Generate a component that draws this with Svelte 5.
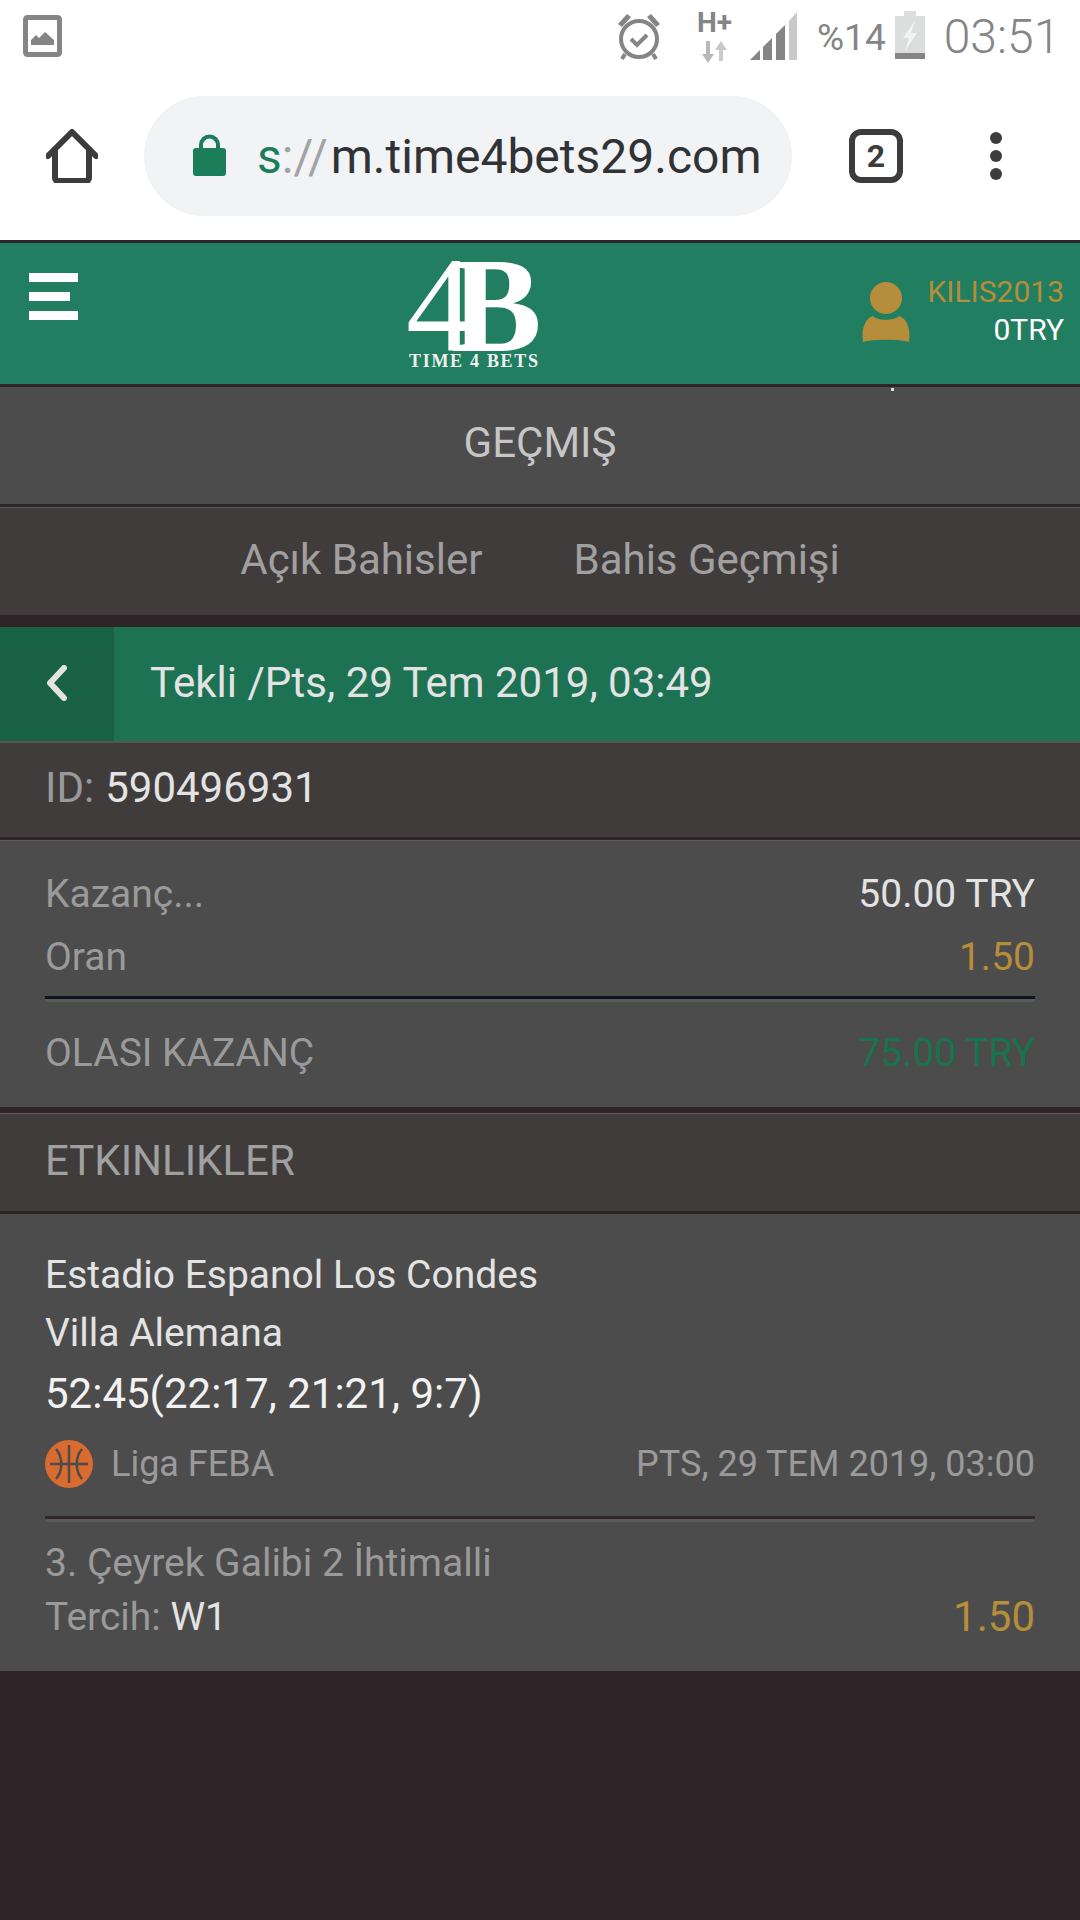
<script>
    const summary = [
        { label: 'Kazanç...', value: '50.00 TRY', tone: 'light' },
        { label: 'Oran', value: '1.50', tone: 'gold' }
    ];
</script>

<div class="page">
    <div class="status">
        <svg class="pic" viewBox="0 0 39 42" width="39" height="42">
            <rect x="2.5" y="2.5" width="34" height="37" rx="2" fill="#fff" stroke="#858585" stroke-width="5" />
            <path d="M8 30V25l5-5 3 3 6-6 9 8v5z" fill="#858585" />
        </svg>
        <svg class="alarm" viewBox="0 0 44 48" width="44" height="48">
            <circle cx="22" cy="27" r="18" fill="none" stroke="#858585" stroke-width="4" />
            <path d="M1 12 10 2l4 3-9 10zM43 12 34 2l-4 3 9 10z" fill="#858585" />
            <path d="M14 27l6 6 10-10" fill="none" stroke="#858585" stroke-width="4" />
            <path d="M8 42l-3 5M36 42l3 5" stroke="#858585" stroke-width="4" />
        </svg>
        <div class="net">
            <span class="hplus">H+</span>
            <svg viewBox="0 0 28 22" width="28" height="22">
                <path d="M9 0v13h4L7 22 1 13h4V0z" fill="#b8b8b8" />
                <path d="M20 0l6 9h-4v11h-4V9h-4z" fill="#c9c9c9" />
            </svg>
        </div>
        <svg class="signal" viewBox="0 0 47 48" width="47" height="48">
            <path d="M0 48 10 38V48z" fill="#858585" />
            <path d="M13 35 22 26V48H13z" fill="#858585" />
            <path d="M26 22 35 13V48H26z" fill="#858585" />
            <path d="M39 9 47 0V48H39z" fill="#c9c9c9" />
        </svg>
        <span class="pct">%14</span>
        <svg class="battery" viewBox="0 0 30 48" width="30" height="48">
            <path d="M9 0h12v5h9v43H0V5h9z" fill="#dcdedd" />
            <path d="M0 42h30v6H0z" fill="#858585" />
            <path d="M20 10 8 27h6l-4 13 12-18h-6z" fill="#f4f4f4" />
        </svg>
        <span class="clock">03:51</span>
    </div>

    <div class="toolbar">
        <svg class="home" viewBox="0 0 52 54" width="52" height="54">
            <path d="M2 27 26 3l24 24M9 22v27a3 3 0 0 0 3 3h28a3 3 0 0 0 3-3V22" fill="none" stroke="#3c3c3c" stroke-width="6" stroke-linecap="round" stroke-linejoin="round" />
        </svg>
        <div class="omnibox">
            <svg class="lock" viewBox="0 0 33 42" width="33" height="42">
                <path d="M8 16V11a8.500 8.500 0 0 1 17 0v5" fill="none" stroke="#1b7d5a" stroke-width="4" />
                <rect x="0" y="14" width="33" height="28" rx="3" fill="#1b7d5a" />
            </svg>
            <span class="url"><span class="scheme">s</span><span class="sep">://</span>m.time4bets29.com</span>
        </div>
        <div class="tabcount">2</div>
        <div class="dots"><i></i><i></i><i></i></div>
    </div>

    <header class="topbar">
        <div class="burger"><i></i><i class="short"></i><i></i></div>
        <svg class="logo" viewBox="0 0 140 126" width="140" height="126">
            <text x="0" y="97" class="logo-mark">4<tspan class="logo-b">B</tspan></text>
            <text x="3" y="113" class="logo-name">TIME 4 BETS</text>
        </svg>
        <div class="user">
            <svg viewBox="0 0 48 60" width="48" height="60">
                <circle cx="24" cy="16" r="16" fill="#b68d3a" />
                <path d="M1 60C-1 48 3 36 11 34c4 5 22 5 26 0 8 2 12 14 10 26-8-3-38-3-46 0z" fill="#b68d3a" />
            </svg>
            <div class="account">
                <span class="name">KILIS2013</span>
                <span class="balance">0TRY</span>
            </div>
        </div>
        <i class="speck"></i>
    </header>

    <div class="title">GEÇMIŞ</div>

    <nav class="tabs">
        <span>Açık Bahisler</span>
        <span>Bahis Geçmişi</span>
    </nav>

    <div class="betbar">
        <div class="back">
            <svg viewBox="0 0 22 36" width="22" height="36">
                <path d="M18 3 4 18l14 15" fill="none" stroke="#e3e3e3" stroke-width="6" stroke-linecap="round" stroke-linejoin="round" />
            </svg>
        </div>
        <div class="bettitle">Tekli /Pts, 29 Tem 2019, 03:49</div>
    </div>

    <div class="idrow"><span class="muted">ID:</span> 590496931</div>

    <section class="summary">
        {#each summary as row}
            <div class="sumrow">
                <span class="muted">{row.label}</span>
                <span class={row.tone}>{row.value}</span>
            </div>
        {/each}
        <div class="rule dark"></div>
        <div class="sumrow total">
            <span class="muted">OLASI KAZANÇ</span>
            <span class="green">75.00 TRY</span>
        </div>
    </section>

    <div class="events">ETKINLIKLER</div>

    <section class="event">
        <div class="team">Estadio Espanol Los Condes</div>
        <div class="team second">Villa Alemana</div>
        <div class="score">52:45(22:17, 21:21, 9:7)</div>
        <div class="meta">
            <svg viewBox="0 0 48 48" width="48" height="48">
                <circle cx="24" cy="24" r="24" fill="#d96a30" />
                <path d="M24 5v38M5 24h38M11 9c7 8 7 22 0 30M37 9c-7 8-7 22 0 30" fill="none" stroke="#4c4c4c" stroke-width="2.500" />
            </svg>
            <span class="league">Liga FEBA</span>
            <span class="date">PTS, 29 TEM 2019, 03:00</span>
        </div>
        <div class="rule plum"></div>
        <div class="market">3. Çeyrek Galibi 2 İhtimalli</div>
        <div class="pick">
            <span><span class="muted">Tercih:</span> <span class="light">W1</span></span>
            <span class="odd">1.50</span>
        </div>
    </section>
</div>

<style>
    :global(body) {
        margin: 0;
        background: #2f2428;
    }

    .page {
        width: 1080px;
        height: 1920px;
        overflow: hidden;
        background: #2f2428;
        font-family: Roboto, sans-serif;
        color: #e3e3e3;
    }

    .status {
        height: 72px;
        background: #fff;
        display: flex;
        align-items: flex-start;
        box-sizing: border-box;
        padding: 0 0 0 22px;
    }

    .pic { margin: 15px 0 0 1px; }
    .alarm { margin: 12px 0 0 555px; }

    .net {
        margin: 8px 0 0 36px;
        width: 35px;
        display: flex;
        flex-direction: column;
        align-items: center;
    }

    .hplus {
        font-size: 28px;
        font-weight: 700;
        line-height: 30px;
        color: #858585;
    }

    .net svg { margin-top: 3px; }
    .signal { margin: 12px 0 0 18px; }

    .pct {
        margin: 19px 0 0 20px;
        font-size: 37px;
        line-height: 38px;
        color: #858585;
    }

    .battery { margin: 11px 0 0 9px; }

    .clock {
        margin: 9px 0 0 19px;
        font-size: 48px;
        line-height: 56px;
        font-weight: 300;
        color: #858585;
    }

    .toolbar {
        height: 168px;
        background: #fff;
        display: flex;
        align-items: flex-start;
        box-sizing: border-box;
        padding: 24px 0 0 46px;
    }

    .home { margin: 33px 0 0 0; }

    .omnibox {
        margin-left: 46px;
        width: 648px;
        height: 120px;
        border-radius: 60px;
        background: #f1f3f4;
        display: flex;
        align-items: center;
        box-sizing: border-box;
        padding-left: 49px;
        overflow: hidden;
    }

    .lock { margin-top: -3px; }

    .url {
        margin-left: 31px;
        font-size: 48px;
        color: #303235;
        white-space: nowrap;
    }

    .scheme { color: #1b7d5a; }
    .sep { color: #a3a3a3; margin-right: 3px; }

    .tabcount {
        margin: 33px 0 0 57px;
        width: 54px;
        height: 54px;
        box-sizing: border-box;
        border: 6px solid #3c3c3c;
        border-radius: 12px;
        display: flex;
        align-items: center;
        justify-content: center;
        font-size: 32px;
        font-weight: 700;
        color: #3c3c3c;
    }

    .dots {
        margin: 36px 0 0 87px;
        display: flex;
        flex-direction: column;
        gap: 6px;
    }

    .dots i {
        display: block;
        width: 12px;
        height: 12px;
        border-radius: 50%;
        background: #3c3c3c;
    }

    .topbar {
        height: 147px;
        box-sizing: border-box;
        background: #217e60;
        border-top: 3px solid #2f2428;
        border-bottom: 3px solid #2f2428;
        display: flex;
        align-items: flex-start;
        position: relative;
    }

    .burger {
        margin: 30px 0 0 29px;
        width: 49px;
        display: flex;
        flex-direction: column;
        gap: 10px;
    }

    .burger i {
        display: block;
        height: 9px;
        background: #fff;
    }

    .burger i.short { width: 41px; }

    .logo {
        margin: 11px 0 0 328px;
        overflow: visible;
    }

    .logo-mark {
        font-family: "Liberation Serif", serif;
        font-size: 136px;
        letter-spacing: -23px;
        fill: #fff;
    }

    .logo-b {
        font-weight: 700;
    }

    .logo-name {
        font-family: "Liberation Serif", serif;
        font-weight: 700;
        font-size: 18px;
        letter-spacing: 1.7px;
        fill: #f0f0f0;
    }

    .user {
        margin-left: auto;
        padding-right: 16px;
        display: flex;
        align-items: flex-start;
    }

    .user svg { margin-top: 39px; }

    .account {
        margin: 30px 0 0 17px;
        display: flex;
        flex-direction: column;
        align-items: flex-end;
        font-size: 30px;
        line-height: 38px;
    }

    .name { color: #b68d3a; }
    .balance { color: #fff; }

    .speck {
        position: absolute;
        left: 891px;
        bottom: -7px;
        width: 3px;
        height: 3px;
        background: #ddd;
    }

    .title {
        height: 117px;
        background: #4c4c4c;
        display: flex;
        align-items: flex-start;
        justify-content: center;
        font-size: 42px;
        line-height: 112px;
        color: #c6c6c6;
        border-bottom: 3px solid #2f2428;
    }

    .tabs {
        height: 108px;
        background: #403c3c;
        border-top: 1px solid #5a5a5a;
        box-sizing: border-box;
        display: flex;
        align-items: center;
        justify-content: center;
        padding-bottom: 4px;
        gap: 91px;
        font-size: 42px;
        color: #a0a0a0;
    }

    .betbar {
        margin-top: 12px;
        height: 116px;
        box-sizing: border-box;
        background: #1c7252;
        border-bottom: 2px solid #555;
        display: flex;
        align-items: stretch;
    }

    .back {
        width: 114px;
        padding-bottom: 2px;
        box-sizing: border-box;
        background: #186046;
        display: flex;
        align-items: center;
        justify-content: center;
    }

    .bettitle {
        padding: 0 0 4px 36px;
        display: flex;
        align-items: center;
        font-size: 42px;
        color: #e3e3e3;
    }

    .idrow {
        height: 97px;
        box-sizing: border-box;
        background: #403c3c;
        border-bottom: 3px solid #2f2428;
        padding: 0 45px 5px;
        display: flex;
        align-items: center;
        gap: 11px;
        font-size: 42px;
        color: #e3e3e3;
    }

    .muted { color: #9a9a9a; }
    .light { color: #e3e3e3; }
    .gold { color: #b68d3a; }
    .green { color: #18734f; }

    .summary {
        height: 267px;
        box-sizing: border-box;
        background: #4c4c4c;
        border-top: 1px solid #5a5a5a;
        padding: 21px 45px 0;
    }

    .sumrow {
        height: 63px;
        display: flex;
        justify-content: space-between;
        align-items: center;
        font-size: 39px;
    }

    .rule {
        height: 3px;
        border-bottom: 3px solid #595959;
    }

    .rule.dark { background: #101522; margin-top: 8px; }
    .rule.plum { background: #2f2428; margin-top: 28px; }

    .sumrow.total { margin-top: 19px; }

    .events {
        margin-top: 6px;
        height: 101px;
        box-sizing: border-box;
        background: #403c3c;
        border-top: 1px solid #5a5a5a;
        border-bottom: 3px solid #2f2428;
        padding: 0 0 5px 45px;
        display: flex;
        align-items: center;
        font-size: 42px;
        color: #a0a0a0;
    }

    .event {
        height: 457px;
        box-sizing: border-box;
        background: #4c4c4c;
        padding: 32px 45px 0;
    }

    .team {
        font-size: 39px;
        line-height: 58px;
        color: #e3e3e3;
    }

    .score {
        font-size: 42px;
        line-height: 64px;
        color: #f2f2f2;
    }

    .meta {
        margin-top: 14px;
        display: flex;
        align-items: center;
        font-size: 36px;
        color: #9a9a9a;
    }

    .league { margin-left: 18px; }
    .date { margin-left: auto; }

    .market {
        margin-top: 15px;
        font-size: 39px;
        line-height: 52px;
        color: #9a9a9a;
    }

    .pick {
        display: flex;
        justify-content: space-between;
        align-items: center;
        font-size: 39px;
        line-height: 56px;
    }

    .odd {
        font-size: 42px;
        color: #b68d3a;
    }
</style>
